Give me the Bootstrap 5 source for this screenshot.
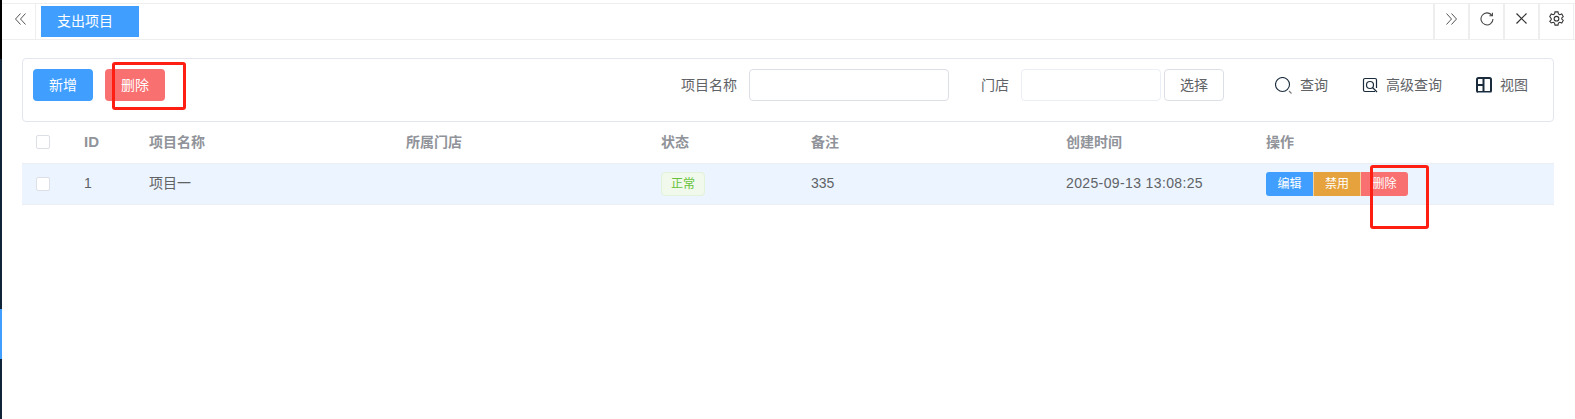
<!DOCTYPE html>
<html lang="zh-CN">
<head>
    <meta charset="UTF-8">
    <meta name="viewport" content="width=device-width, initial-scale=1">
    <title>支出项目</title>
    <link href="https://cdn.jsdelivr.net/npm/bootstrap@5.3.2/dist/css/bootstrap.min.css" rel="stylesheet">
    <script defer src="https://cdn.jsdelivr.net/npm/bootstrap@5.3.2/dist/js/bootstrap.bundle.min.js"></script>
    <style>
        html, body { height: 419px; overflow: hidden; }
        body {
            font-family: "Liberation Sans", "Noto Sans CJK SC", sans-serif;
            font-size: 14px;
            color: #606266;
            background: #fff;
        }
        .side-stripe { width: 2px; height: 419px; flex: none; background: linear-gradient(#000 0 59px, #0f2438 59px 309px, #409eff 309px 359px, #0f2438 359px); }
        .page-main { flex: 1; position: relative; min-width: 0; }

        .tabs-bar { height: 37px; margin-top: 3px; border-top: 1px solid #eee; border-bottom: 1px solid #eee; }
        .tab-cell { width: 35px; height: 100%; display: flex; align-items: center; justify-content: center; padding-bottom: 6px; color: #666; }
        .tab-left { width: 34px; padding-left: 4px; border-right: 1px solid #eee; }
        .tab-right { border-left: 2px solid #eee; }
        .tab-active { width: 98px; height: 31px; margin: 2px 0 0 5px; padding-left: 16px; background: #409eff; color: #fff; display: flex; align-items: center; }
        .tab-tools { margin-right: 1px; border-right: 1px solid #eee; }

        .tool-box { margin: 18px 21px 0 20px; height: 64px; border: 1px solid #e4e6ef; border-radius: 4px; padding: 10px 0 0 10px; }
        .act-btn { width: 60px; height: 32px; padding: 0; border: 0; border-radius: 4px; color: #fff; font-size: 14px; }
        .act-blue { background: #409eff; }
        .act-red { background: #f87070; margin-left: 12px; }
        .query-group { height: 32px; margin-right: 25px; }
        .query-input { height: 32px; margin: 0 32px 0 12px; border: 1px solid #dcdfe6; border-radius: 4px; background: #fff; outline: 0; }
        .input-name { width: 200px; }
        .input-shop { width: 140px; margin-right: 3px; border-color: #ebeef5; }
        .pick-btn { width: 60px; height: 32px; margin-right: 51px; padding: 0; background: #fff; border: 1px solid #dcdfe6; border-radius: 4px; color: #606266; font-size: 14px; }
        .tool-links { gap: 34px; }
        .tool-link { display: flex; align-items: center; gap: 8px; color: #606266; }

        .data-table { width: 1532px; margin-left: 20px; table-layout: fixed; border-collapse: collapse; }
        .data-table th { height: 41px; padding: 0 0 0 10px; color: #909399; font-weight: 700; border-bottom: 1px solid #ebeef5; }
        .data-table td { height: 41px; padding: 0 0 0 10px; background: #ecf5ff; border-bottom: 1px solid #ebeef5; }
        .data-table .head-id { font-size: 15px; }
        .date-cell { letter-spacing: .37px; }
        .tick-box { display: block; width: 14px; height: 14px; margin-left: 4px; background: #fff; border: 1px solid #dcdfe6; border-radius: 2px; }
        .state-tag { display: inline-block; width: 44px; height: 24px; line-height: 22px; text-align: center; font-size: 12px; color: #67c23a; background: #f0f9eb; border: 1px solid #e1f3d8; border-radius: 4px; }
        .row-btn { width: 47px; height: 24px; padding: 0; border: 0; color: #fff; font-size: 12px; float: left; }
        .row-blue { background: #409eff; border-radius: 3px 0 0 3px; }
        .row-orange { background: #e6a23c; border-left: 1px solid #f3d19e; }
        .row-red { width: 48px; background: #f87070; border-left: 1px solid #f3d19e; border-radius: 0 3px 3px 0; }

        .mark-red { position: absolute; border: 3px solid #ff1e12; border-radius: 3px; pointer-events: none; }
        .mark-one { left: 110px; top: 62px; width: 74px; height: 48px; }
        .mark-two { left: 1368px; top: 165px; width: 59px; height: 64px; }
    </style>
</head>
<body class="d-flex">
<div class="side-stripe"></div>
<div class="page-main">
    <!-- вкладки -->
    <div class="tabs-bar d-flex">
        <div class="tab-cell tab-left">
            <svg width="11" height="12" viewBox="0 0 11 12" fill="none" stroke="#555"><path d="M5.500.5 .5 6l5 5.500M10.500.5l-5 5.500 5 5.500"/></svg>
        </div>
        <div class="tab-active">支出项目</div>
        <div class="tab-tools ms-auto d-flex">
            <div class="tab-cell tab-right">
                <svg width="11" height="12" viewBox="0 0 11 12" fill="none" stroke="#555"><path d="m.5.5 5 5.500-5 5.500M5.500.5l5 5.500-5 5.500"/></svg>
            </div>
            <div class="tab-cell tab-right">
                <svg width="14" height="14" viewBox="0 0 14 14" fill="none" stroke="#444" stroke-width="1.1"><path d="M12 3.600A6 6 0 1 0 13 7"/><path d="M12.400.8v3h-3"/></svg>
            </div>
            <div class="tab-cell tab-right">
                <svg width="11" height="11" viewBox="0 0 11 11" fill="none" stroke="#333" stroke-width="1.2"><path d="m.5.5 10 10M10.500.5l-10 10"/></svg>
            </div>
            <div class="tab-cell tab-right">
                <svg width="15" height="15" viewBox="0 0 14 14" fill="none" stroke="#333"><path d="M5.600.8h2.800l.4 1.900 1.300.7 1.800-.6 1.400 2.400-1.400 1.300v1l1.400 1.300-1.400 2.400-1.800-.6-1.300.7-.4 1.900H5.600l-.4-1.900-1.300-.7-1.800.6L.7 9.500l1.400-1.300v-1L.7 5.200l1.400-2.400 1.800.6 1.300-.7z"/><circle cx="7" cy="7.200" r="2.200"/></svg>
            </div>
        </div>
    </div>

    <!-- панель -->
    <div class="tool-box d-flex">
        <button class="act-btn act-blue">新增</button>
        <button class="act-btn act-red">删除</button>
        <div class="query-group ms-auto d-flex align-items-center">
            <span>项目名称</span>
            <input class="query-input input-name" type="text">
            <span>门店</span>
            <input class="query-input input-shop" type="text">
            <button class="pick-btn">选择</button>
            <div class="tool-links d-flex align-items-center">
                <div class="tool-link">
                    <svg width="17" height="17" viewBox="0 0 17 17" fill="none" stroke="#1a2b3c" stroke-width="1.1"><circle cx="7.500" cy="7.500" r="7"/><path d="m14 14 2.500 2.500" stroke="#777"/></svg>
                    <span>查询</span>
                </div>
                <div class="tool-link">
                    <svg width="16" height="16" viewBox="0 0 16 16" fill="none" stroke="#1a2b3c" stroke-width="1.2"><path d="M13 14.500H3A1.500 1.500 0 0 1 1.500 13V3A1.500 1.500 0 0 1 3 1.500h10A1.500 1.500 0 0 1 14.500 3v8"/><circle cx="8" cy="8" r="3.500"/><path d="m10.500 10.500 4.500 4.500"/></svg>
                    <span>高级查询</span>
                </div>
                <div class="tool-link">
                    <svg width="16" height="16" viewBox="0 0 16 16" fill="none"><rect x="1" y="1" width="14" height="14" rx="1.500" stroke="#1a2b3c" stroke-width="2"/><path d="M7.500 1v14M1 8h6.500" stroke="#1a2b3c" stroke-width="2"/><path d="M2 15.500h13" stroke="#8a99a8"/></svg>
                    <span>视图</span>
                </div>
            </div>
        </div>
    </div>

    <!-- таблица -->
    <table class="data-table">
        <colgroup>
            <col style="width:52px"><col style="width:65px"><col style="width:257px"><col style="width:255px">
            <col style="width:150px"><col style="width:255px"><col style="width:200px"><col style="width:298px">
        </colgroup>
        <thead>
        <tr>
            <th><span class="tick-box"></span></th>
            <th class="head-id">ID</th><th>项目名称</th><th>所属门店</th><th>状态</th><th>备注</th><th>创建时间</th><th>操作</th>
        </tr>
        </thead>
        <tbody>
        <tr>
            <td><span class="tick-box"></span></td>
            <td>1</td><td>项目一</td><td></td>
            <td><span class="state-tag">正常</span></td>
            <td>335</td>
            <td class="date-cell">2025-09-13 13:08:25</td>
            <td>
                <button class="row-btn row-blue">编辑</button>
                <button class="row-btn row-orange">禁用</button>
                <button class="row-btn row-red">删除</button>
            </td>
        </tr>
        </tbody>
    </table>

    <div class="mark-red mark-one"></div>
    <div class="mark-red mark-two"></div>
</div>
</body>
</html>
